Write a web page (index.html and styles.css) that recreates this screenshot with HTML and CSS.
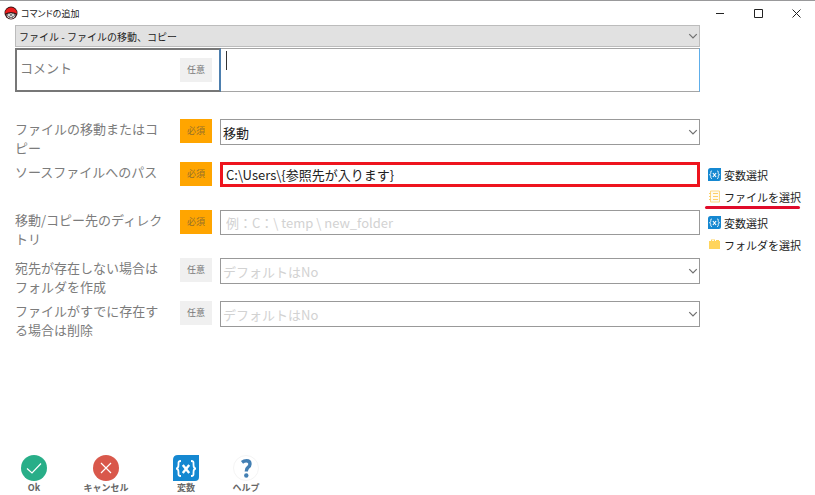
FILE: index.html
```
<!DOCTYPE html>
<html lang="ja">
<head>
<meta charset="utf-8">
<title>コマンドの追加</title>
<link rel="stylesheet" href="styles.css">
</head>
<body>
<svg class="defs" aria-hidden="true">
  <symbol id="chevron" viewBox="0 0 8 8"><path d="M1 2.500 4 5.500 7 2.500" fill="none" stroke="#707070"/></symbol>
  <symbol id="variable" viewBox="0 0 26 26"><path d="M5 0H26V22Q26 26 22 26H0V5Q0 0 5 0Z" fill="#1588d1"/><path d="M8 6C5 6 5.500 7.500 5.500 9.500C5.500 12 5 13.500 3 13.500C5 13.500 5.500 15 5.500 17.500C5.500 19.500 5 21 8 21M18 6C21 6 20.500 7.500 20.500 9.500C20.500 12 21 13.500 23 13.500C21 13.500 20.500 15 20.500 17.500C20.500 19.500 21 21 18 21" fill="none" stroke="#fff" stroke-width="1.800"/><path d="M9.800 10 16.200 18M16.200 10 9.800 18" stroke="#fff" stroke-width="2.400"/></symbol>
</svg>
<header class="titlebar">
  <svg class="logo" viewBox="0 0 14 14"><circle cx="7" cy="7" r="6.500" fill="#3b1717"/><path d="M1 7.500A6 6 0 0 1 13 7.500Q7 4.500 1 7.500" fill="#ee1c1c"/><path d="M2.500 8.500Q7 6 11.500 8.500Q11 12.500 7 12.700Q3 12.500 2.500 8.500" fill="#f3eeee"/><circle cx="5" cy="9" r="1.500" fill="#fff" stroke="#333" stroke-width=".7"/><circle cx="9" cy="9" r="1.500" fill="#fff" stroke="#333" stroke-width=".7"/><path d="M5 11.500H9" stroke="#555" stroke-width=".8"/></svg>
  <h1 class="title">コマンドの追加</h1>
  <div class="window-buttons">
    <button type="button" aria-label="最小化"><svg viewBox="0 0 9 9"><path d="M0 4.500H8" stroke="#222"/></svg></button>
    <button type="button" aria-label="最大化"><svg viewBox="0 0 9 9"><path d="M.5 .5H8.500V8.500H.5Z" fill="none" stroke="#222"/></svg></button>
    <button type="button" aria-label="閉じる"><svg viewBox="0 0 9 9"><path d="M.5 .5 8.500 8.500M8.500 .5 .5 8.500" stroke="#222"/></svg></button>
  </div>
</header>
<main class="content">
  <div class="top">
    <div class="select-box">
      <select class="command" aria-label="コマンド"><option>ファイル - ファイルの移動、コピー</option></select>
      <svg class="chevron"><use href="#chevron"/></svg>
    </div>
    <div class="comment">
      <div class="comment-label">
        <label for="comment">コメント</label>
        <span class="tag">任意</span>
      </div>
      <div class="comment-field">
        <textarea id="comment"></textarea>
        <span class="caret"></span>
      </div>
    </div>
  </div>
  <form class="fields" id="command-form">
    <div class="row">
      <label for="mode">ファイルの移動またはコピー</label>
      <span class="tag required">必須</span>
      <div class="select-box">
        <select class="field" id="mode"><option>移動</option></select>
        <svg class="chevron"><use href="#chevron"/></svg>
      </div>
    </div>
    <div class="row">
      <label for="source">ソースファイルへのパス</label>
      <span class="tag required">必須</span>
      <input class="field marked" id="source" type="text" value="C:\Users\{参照先が入ります}">
      <div class="links">
        <button type="button"><svg viewBox="0 0 26 26"><use href="#variable"/></svg>変数選択</button>
        <button type="button" class="underlined"><svg viewBox="0 0 13 13"><path d="M2.500 1H11.500V12H2.500Z" fill="#fffaf0" stroke="#fcd884"/><path d="M5 3.500H10M5 6.500H10M5 9.500H10M1 3.500H3M1 6.500H3M1 9.500H3" stroke="#fcd068"/></svg>ファイルを選択</button>
      </div>
    </div>
    <div class="row">
      <label for="target">移動/コピー先のディレクトリ</label>
      <span class="tag required">必須</span>
      <input class="field" id="target" type="text" placeholder="例：C：\ temp \ new_folder">
      <div class="links">
        <button type="button"><svg viewBox="0 0 26 26"><use href="#variable"/></svg>変数選択</button>
        <button type="button"><svg viewBox="0 0 13 13"><path d="M1 3H3V1.500H7V3H8V2H11V3H12V11H1Z" fill="#ffd45c"/><path d="M4 2.500H6" stroke="#fff" stroke-width=".8"/></svg>フォルダを選択</button>
      </div>
    </div>
    <div class="row">
      <label for="create">宛先が存在しない場合はフォルダを作成</label>
      <span class="tag">任意</span>
      <div class="select-box">
        <select class="field empty" id="create"><option>デフォルトはNo</option></select>
        <svg class="chevron"><use href="#chevron"/></svg>
      </div>
    </div>
    <div class="row">
      <label for="delete">ファイルがすでに存在する場合は削除</label>
      <span class="tag">任意</span>
      <div class="select-box">
        <select class="field empty" id="delete"><option>デフォルトはNo</option></select>
        <svg class="chevron"><use href="#chevron"/></svg>
      </div>
    </div>
  </form>
</main>
<footer class="actions">
  <button type="submit" form="command-form"><svg viewBox="0 0 26 26"><circle cx="13" cy="13" r="13" fill="#28ae88"/><path d="M6 13.500 11 18 20 8.500" fill="none" stroke="#fff" stroke-width="1.200"/></svg>Ok</button>
  <button type="button"><svg viewBox="0 0 26 26"><circle cx="13" cy="13" r="13" fill="#d9584b"/><path d="M8 8 18 18M18 8 8 18" stroke="#fff" stroke-width="1.200"/></svg>キャンセル</button>
  <button type="button"><svg viewBox="0 0 26 26"><use href="#variable"/></svg>変数</button>
  <button type="button"><svg viewBox="0 0 26 26"><circle cx="13" cy="13" r="12.500" fill="#fff" stroke="#f4f4f4"/><path d="M9 7.300Q11 5.700 13.500 5.700Q17 5.700 17 9Q17 11 15 12.500Q13.300 13.700 13.300 16.500" fill="none" stroke="#437fb3" stroke-width="3.400"/><circle cx="13.300" cy="20.500" r="2.200" fill="#437fb3"/></svg>ヘルプ</button>
</footer>
</body>
</html>
```
FILE: styles.css
```
* {
  box-sizing: border-box;
}

body {
  display: flex;
  flex-direction: column;
  min-height: 100vh;
  margin: 0;
  border-top: 1px solid #99999b;
  background: #fff;
  color: #7c7c7c;
  font: 13px/19px "Noto Sans CJK JP", sans-serif;
}

button,
input,
select,
textarea {
  margin: 0;
  border: 0;
  border-radius: 0;
  background: none;
  font: inherit;
}

button {
  padding: 0;
}

.defs {
  position: absolute;
  width: 0;
  height: 0;
}

.titlebar {
  display: flex;
  align-items: center;
  gap: 3px;
  height: 24px;
  padding: 0 14px 0 4px;
}

.logo {
  width: 14px;
  height: 14px;
}

.title {
  margin: 0;
  color: #222;
  font-size: 9px;
  font-weight: 400;
  font-feature-settings: "palt";
}

.window-buttons {
  display: flex;
  gap: 29px;
  margin-left: auto;
}

.window-buttons button {
  display: flex;
}

.window-buttons svg {
  width: 9px;
  height: 9px;
}

.content {
  padding-left: 15px;
}

.top {
  margin-right: 115px;
}

.select-box {
  position: relative;
}

.chevron {
  position: absolute;
  top: 50%;
  right: 2px;
  width: 10px;
  height: 10px;
  margin-top: -5px;
  pointer-events: none;
}

select {
  display: block;
  width: 100%;
  appearance: none;
}

.command {
  height: 22px;
  padding: 0 3px;
  border: 1px solid #bcbcbc;
  background: #e1e1e1;
  color: #222;
  font-size: 10px;
}

.comment {
  display: flex;
  height: 44px;
  margin-top: 1px;
}

.comment-label {
  display: flex;
  justify-content: space-between;
  align-items: center;
  width: 206px;
  padding: 0 7px 0 3px;
  border: 2px solid #777;
  border-right-color: #4d7fae;
}

.comment-label label {
  padding-bottom: 5px;
}

.comment-field {
  position: relative;
  flex: 1;
  border: 1px solid #a5a5a5;
  border-left: 0;
  border-right-color: #5eaeea;
}

.comment-field textarea {
  display: block;
  width: 100%;
  height: 100%;
  padding: 2px 5px;
  resize: none;
}

.caret {
  position: absolute;
  top: 2px;
  left: 5px;
  width: 1px;
  height: 19px;
  background: #333;
}

.tag {
  width: 32px;
  height: 24px;
  background: #f0f0f0;
  color: #777;
  font-size: 9px;
  line-height: 24px;
  text-align: center;
}

.tag.required {
  background: #ffa500;
  color: #96702a;
}

.fields {
  display: grid;
  gap: 5px;
  margin-top: 27px;
}

.row {
  display: grid;
  grid-template-columns: 150px 55px minmax(0, 1fr) 115px;
  align-items: start;
  min-height: 38px;
}

.row .tag {
  margin-left: 15px;
}

.field {
  width: 100%;
  height: 26px;
  padding: 0 2px;
  border: 1px solid #999;
  color: #222;
}

input.field {
  height: 25px;
  padding: 0 5px;
}

.field.marked {
  border: 3px solid #ee141e;
  padding: 0 3px;
}

.field::placeholder,
.field.empty {
  color: #d2d2d2;
  opacity: 1;
}

.links {
  display: grid;
  grid-auto-rows: 22px;
  justify-items: start;
  margin-bottom: -1px;
  padding-left: 8px;
}

.links button {
  display: flex;
  align-items: center;
  gap: 3px;
  padding-top: 4px;
  color: #222;
  font-size: 11px;
  line-height: 19px;
  white-space: nowrap;
}

.links svg {
  width: 13px;
  height: 13px;
  margin-bottom: 2px;
}

.underlined {
  position: relative;
}

.underlined::after {
  position: absolute;
  right: 1px;
  bottom: -3px;
  left: -3px;
  height: 3px;
  border-radius: 2px;
  background: #e00b2a;
  content: "";
}

.actions {
  display: flex;
  gap: 12px;
  margin-top: auto;
  padding-left: 10px;
}

.actions button {
  display: flex;
  flex-direction: column;
  align-items: center;
  min-width: 48px;
  color: #666;
  font-size: 9px;
  font-weight: 700;
  line-height: 14px;
}

.actions button:nth-child(2) {
  margin: 0 20px 0 12px;
}

.actions svg {
  width: 26px;
  height: 26px;
}
```
